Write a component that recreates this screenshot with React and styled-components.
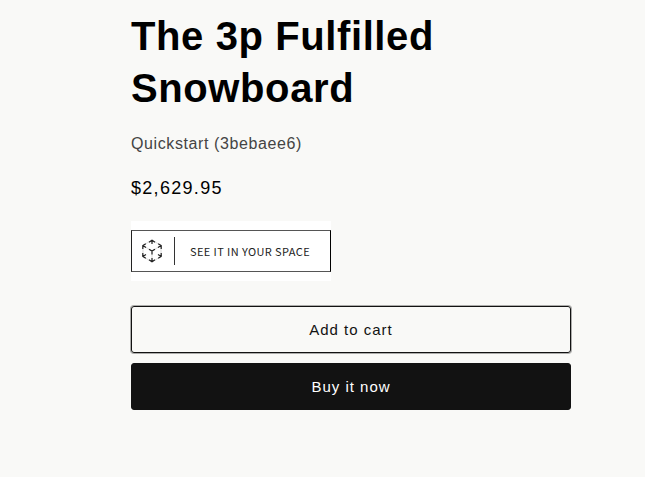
import React from "react";
import styled, { createGlobalStyle } from "styled-components";

const GlobalStyle = createGlobalStyle`
  *, *::before, *::after { box-sizing: border-box; }
  body {
    margin: 0;
    background: #f9f9f7;
    color: #000;
    font-family: "Liberation Sans", Arial, sans-serif;
  }
`;

const Product = styled.main`
  display: flex;
  flex-direction: column;
  align-items: flex-start;
  max-width: 714px;
  padding: 10px 74px 64px 131px;
`;

const Title = styled.h1`
  margin: 0;
  font-size: 40px;
  line-height: 52px;
  font-weight: 700;
  letter-spacing: 0.6px;
`;

const Vendor = styled.p`
  margin: 20px 0 0;
  font-size: 16px;
  line-height: 20px;
  letter-spacing: 0.6px;
  color: #444;
`;

const Price = styled.p`
  margin: 20px 0 0;
  font-size: 18px;
  line-height: 28px;
  letter-spacing: 1.3px;
`;

const SpacePanel = styled.div`
  display: flex;
  width: 200px;
  margin-top: 19px;
  padding: 9px 0;
  background: #fff;
`;

const SpaceButton = styled.button`
  display: flex;
  align-items: center;
  width: 100%;
  height: 42px;
  padding: 0 0 0 10px;
  border: 1px solid;
  border-color: #555 #000 #555 #222;
  border-radius: 0;
  background: #fff;
  color: #222;
  font-family: "Noto Sans CJK SC", "Noto Sans", sans-serif;
  font-size: 11px;
  line-height: 16px;
  letter-spacing: 0.4px;
  white-space: nowrap;
  cursor: pointer;
`;

const SpaceLabel = styled.span`
  margin-left: 12px;
  padding: 6px 0 6px 15px;
  border-left: 1px solid #333;
`;

const Actions = styled.div`
  display: grid;
  gap: 10px;
  width: 100%;
  margin-top: 25px;
`;

const ActionButton = styled.button`
  width: 100%;
  min-height: 47px;
  padding: 0 28px;
  border: 1px solid #121212;
  border-radius: 3px;
  background: ${({ $filled }) => ($filled ? "#121212" : "transparent")};
  box-shadow: ${({ $filled }) => ($filled ? "none" : "0 0 0 1px #12121255")};
  color: ${({ $filled }) => ($filled ? "#fff" : "#121212")};
  font-family: inherit;
  font-size: 15px;
  line-height: 18px;
  letter-spacing: 1px;
  cursor: pointer;
`;

function CubeIcon() {
  return (
    <svg width="20" height="24" viewBox="0 0 20 24" fill="none" aria-hidden="true">
      <path d="M10 1 19 6.5v11L10 23 1 17.5v-11zM1 6.5l9 5.5 9-5.5M10 12v11" stroke="#ccc" strokeWidth=".7" />
      <path
        d="M7 3.2 10 1.2l3 2M10 1.2V5M7 20.8l3 2 3-2M10 22.8V19M.8 10V6.6l3-1.9M.8 6.6 4 8.5M19.2 10V6.6l-3-1.9M19.2 6.6 16 8.5M.8 14v3.4l3 1.9M.8 17.4 4 15.5M19.2 14v3.4l-3 1.9M19.2 17.4 16 15.5M7 10.2l3 1.8 3-1.8M10 12v3.5"
        stroke="#222"
        strokeWidth="1.2"
      />
    </svg>
  );
}

export default function App() {
  return (
    <>
      <GlobalStyle />
      <Product>
        <Title>The 3p Fulfilled Snowboard</Title>
        <Vendor>Quickstart (3bebaee6)</Vendor>
        <Price>$2,629.95</Price>
        <SpacePanel>
          <SpaceButton type="button">
            <CubeIcon />
            <SpaceLabel>SEE IT IN YOUR SPACE</SpaceLabel>
          </SpaceButton>
        </SpacePanel>
        <Actions>
          <ActionButton type="button">Add to cart</ActionButton>
          <ActionButton type="button" $filled>Buy it now</ActionButton>
        </Actions>
      </Product>
    </>
  );
}
